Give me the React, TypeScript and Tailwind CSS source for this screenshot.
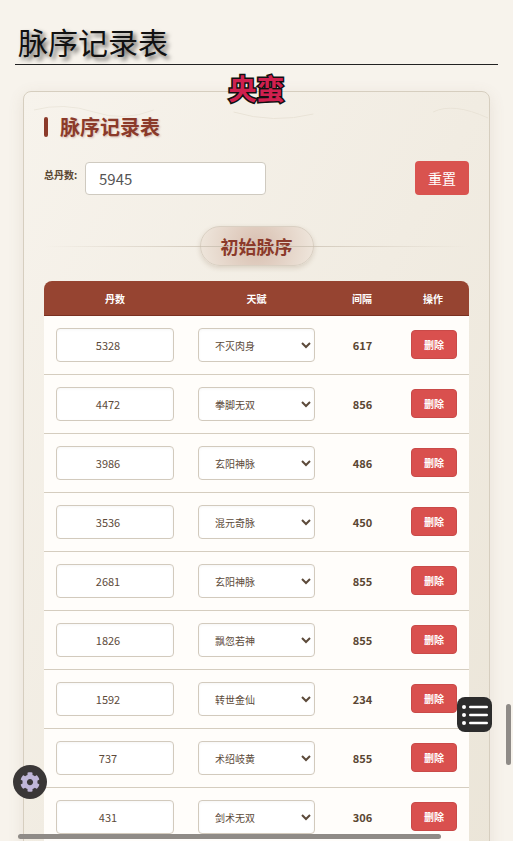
import { FaCog } from "react-icons/fa";

const font = "font-['Noto_Sans_CJK_SC','Noto_Sans',sans-serif]";

const talents = ["不灭肉身", "拳脚无双", "玄阳神脉", "混元奇脉", "飘忽若神", "转世金仙", "术绍岐黄", "剑术无双"];

const rows = [
  { dan: 5328, talent: "不灭肉身", gap: 617 },
  { dan: 4472, talent: "拳脚无双", gap: 856 },
  { dan: 3986, talent: "玄阳神脉", gap: 486 },
  { dan: 3536, talent: "混元奇脉", gap: 450 },
  { dan: 2681, talent: "玄阳神脉", gap: 855 },
  { dan: 1826, talent: "飘忽若神", gap: 855 },
  { dan: 1592, talent: "转世金仙", gap: 234 },
  { dan: 737, talent: "术绍岐黄", gap: 855 },
  { dan: 431, talent: "剑术无双", gap: 306 },
];

function Row({ dan, talent, gap }: { dan: number; talent: string; gap: number }) {
  return (
    <div className="grid grid-cols-[142px_141px_70px_72px] items-center h-[59px] border-b border-[#d5cdbf] bg-[#fffdfa] shrink-0">
      <div className="px-3">
        <input
          readOnly
          value={dan}
          className="w-full h-[34px] pr-[14px] text-center text-[11px] text-[#5c4a3a] bg-white border border-[#d2cabd] rounded-[4px] outline-none shadow-[inset_0_1px_3px_rgba(0,0,0,0.04)]"
        />
      </div>
      <div className="px-3">
        <select
          defaultValue={talent}
          className="w-full h-[34px] pl-3 text-[10px] text-[#5c4a3a] bg-white border border-[#d2cabd] rounded-[4px] outline-none shadow-[inset_0_1px_3px_rgba(0,0,0,0.04)]"
        >
          {talents.map((t) => (
            <option key={t}>{t}</option>
          ))}
        </select>
      </div>
      <div className="pl-px text-center text-[11px] font-bold text-[#5a4632]">{gap}</div>
      <div className="flex justify-center pl-[2px] -mt-px">
        <button className="w-[46px] h-[29px] rounded-[4px] bg-[#d9504e] border border-[#c94a48] text-white text-[10px] font-bold">删除</button>
      </div>
    </div>
  );
}

export default function App() {
  return (
    <div className={`${font} relative h-[841px] overflow-hidden bg-[#f7f3ec]`}>
      <div className="px-[15px] pt-[19px]">
        <h1 className="h-[46px] border-b border-[#222] pl-[3px] text-[30px] leading-[45px] text-[#111] [text-shadow:3px_3px_4px_rgba(0,0,0,0.6)]">
          脉序记录表
        </h1>
      </div>

      <div className="absolute left-0 right-0 top-[70px] z-10 text-center text-[28px] leading-[36px] font-bold text-[#d0204f] [-webkit-text-stroke:3px_#111] [paint-order:stroke_fill]">
        央蛮
      </div>

      <div className="relative mx-[23px] mt-[26px] h-[800px] rounded-[8px] border border-[#d6cebf] bg-gradient-to-br from-[#f7f3ec] to-[#ebe5d8] px-5 shadow-[0_4px_16px_rgba(120,100,70,0.12)]">
        <svg className="absolute left-0 top-[12px] w-full h-[24px]" viewBox="0 0 466 24" fill="none">
          <path d="M10 6 Q40 -2 70 8 T130 6" stroke="#ece7dc" strokeWidth="1" />
          <path d="M210 8 Q250 20 290 10" stroke="#e9e3d7" strokeWidth="1" />
          <path d="M410 8 Q430 -2 465 14" stroke="#e9e3d7" strokeWidth="1" />
        </svg>

        <div className="relative flex items-center pt-[23px] h-[47px]">
          <span className="w-1 h-5 rounded-sm bg-[#8b3a2a]" />
          <h2 className="ml-3 text-[20px] leading-none font-bold text-[#8b3a2a] [text-shadow:1px_1px_2px_rgba(139,58,42,0.3)]">
            脉序记录表
          </h2>
        </div>

        <div className="relative flex items-center justify-between mt-[22px]">
          <div className="flex items-center">
            <label className="w-[41px] -mt-[7px] text-[10px] font-bold text-[#5a4632] whitespace-nowrap">总丹数:</label>
            <input
              readOnly
              value="5945"
              className="w-[181px] h-[33px] pl-[13px] text-[15px] text-[#555] bg-white border border-[#cfcac0] rounded-[4px] outline-none"
            />
          </div>
          <button className="w-[54px] h-[34px] rounded-[4px] bg-[#d9534f] text-white text-[14px]">重置</button>
        </div>

        <div className="relative flex justify-center mt-[31px]">
          <div className="w-[114px] h-10 rounded-[20px] flex items-center justify-center border border-[#d9cfc2] bg-[radial-gradient(circle,#d8bfb0,#efe7dd)] shadow-[0_2px_5px_rgba(120,90,60,0.2)] text-[18px] font-bold text-[#8b3a2a]">
            初始脉序
          </div>
          <div className="absolute left-0 right-0 top-[20px] h-px bg-gradient-to-r from-transparent via-[#c9bfb0] to-transparent" />
        </div>

        <div className="mt-[15px] flex flex-col">
          <div className="grid grid-cols-[142px_141px_70px_72px] items-center h-[35px] rounded-t-[8px] bg-[#964431] border-b border-[#7a3020] text-center text-[10px] font-bold text-white">
            <span>丹数</span>
            <span>天赋</span>
            <span>间隔</span>
            <span>操作</span>
          </div>
          {rows.map((r) => (
            <Row key={r.dan} {...r} />
          ))}
        </div>
      </div>

      {/* floating widgets */}
      <div className="absolute left-[457px] top-[697px] z-20 w-[35px] h-[35px] rounded-[8px] bg-[#2c2c2c] flex items-center justify-center">
        <svg width="27" height="24" viewBox="0 0 27 24">
          <circle cx="3" cy="4" r="2" fill="#fff" />
          <circle cx="3" cy="12" r="2" fill="#fff" />
          <circle cx="3" cy="20" r="2" fill="#fff" />
          <rect x="8" y="2.75" width="19" height="2.5" rx="1.25" fill="#fff" />
          <rect x="8" y="10.75" width="19" height="2.5" rx="1.25" fill="#fff" />
          <rect x="8" y="18.75" width="19" height="2.5" rx="1.25" fill="#fff" />
        </svg>
      </div>
      <div className="absolute left-[13px] top-[765px] z-20 w-[34px] h-[34px] rounded-full bg-[#3a3737] flex items-center justify-center">
        <FaCog className="w-5 h-5 text-[#c0b6d8]" />
      </div>

      {/* overlay scrollbars */}
      <div className="absolute left-[506px] top-[704px] z-20 w-[5px] h-[61px] rounded-full bg-[#8f8b87]" />
      <div className="absolute left-[18px] top-[834px] z-20 w-[423px] h-[5px] rounded-full bg-[#8f8b87]" />
    </div>
  );
}
